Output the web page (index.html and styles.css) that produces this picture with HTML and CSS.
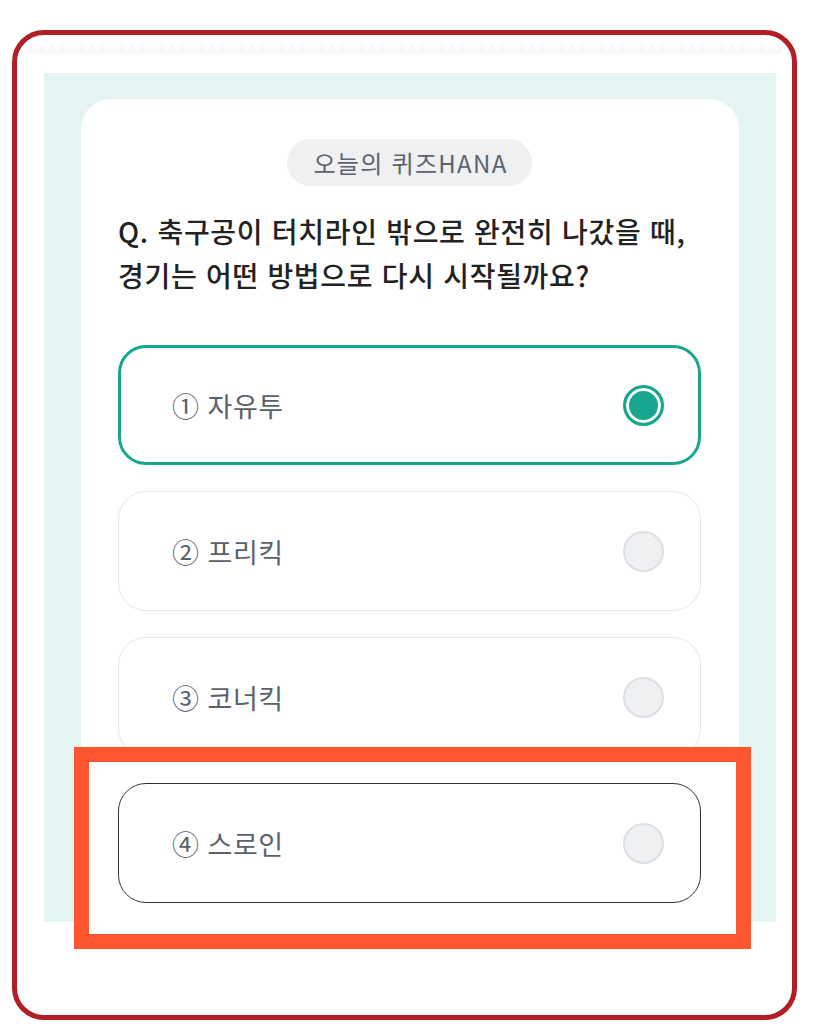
FILE: index.html
```html
<!DOCTYPE html>
<html lang="ko">
<head>
  <meta charset="UTF-8">
  <meta name="viewport" content="width=device-width, initial-scale=1.0">
  <title>오늘의 퀴즈HANA</title>
  <link rel="stylesheet" href="styles.css">
</head>
<body>
  <div class="frame">
    <div class="torn-edge"></div>

    <div class="panel">
      <div class="card">
        <div class="badge">오늘의 퀴즈HANA</div>

        <p class="question">Q. 축구공이 터치라인 밖으로 완전히 나갔을 때,<br>경기는 어떤 방법으로 다시 시작될까요?</p>

        <!-- Answer options -->
        <div class="options">
          <div class="option selected">
            <span class="label">① 자유투</span>
            <span class="radio"></span>
          </div>
          <div class="option">
            <span class="label">② 프리킥</span>
            <span class="radio"></span>
          </div>
          <div class="option">
            <span class="label">③ 코너킥</span>
            <span class="radio"></span>
          </div>
          <div class="option focused">
            <span class="label">④ 스로인</span>
            <span class="radio"></span>
          </div>
        </div>
      </div>
    </div>

    <!-- Annotation box drawn over the last option -->
    <div class="highlight"></div>
  </div>
</body>
</html>
```

FILE: styles.css
```css
body {
  margin: 0;
  padding: 0;
  background: #fff;
  font-family: "Noto Sans CJK KR", "Noto Sans", sans-serif;
}
.frame {
  position: relative;
  box-sizing: border-box;
  width: 785px;
  height: 990px;
  margin: 30px 0 0 12px;
  border: 5px solid #b01f26;
  border-radius: 32px;
  background: #fff;
  overflow: hidden;
}
.torn-edge {
  height: 14px;
  margin: 5px 10px 0;
  background:
    linear-gradient(135deg, #fff 45%, transparent 46%) 0 0 / 10px 14px repeat-x,
    linear-gradient(225deg, #fff 45%, transparent 46%) 0 0 / 10px 14px repeat-x,
    linear-gradient(#f3f3f3, #fafafa);
}
.panel {
  margin: 19px 16px 0 27px;
  padding: 26px 37px 0;
  background: #e3f4f2;
}
.card {
  background: #fff;
  border-radius: 30px 30px 0 0;
  padding: 40px 38px 19px 37px;
}
.badge {
  width: fit-content;
  margin: 0 auto;
  height: 47px;
  line-height: 47px;
  padding: 0 24px 0 26px;
  border-radius: 24px;
  background: #eef0f2;
  color: #5c636d;
  font-size: 24px;
  letter-spacing: 1.3px;
}
.question {
  margin: 23px 0 0;
  font-size: 28px;
  line-height: 44px;
  font-weight: 500;
  letter-spacing: 0.7px;
  color: #222;
}
.options {
  margin-top: 48px;
  display: flex;
  flex-direction: column;
  gap: 26px;
}
.option {
  box-sizing: border-box;
  height: 120px;
  display: flex;
  align-items: center;
  justify-content: space-between;
  padding: 0 36px 0 53px;
  border: 1px solid #e6e7e9;
  border-radius: 28px;
  background: #fff;
}
.option.selected {
  border: 3px solid #17a68e;
  padding: 0 34px 0 51px;
}
.option.focused {
  border-color: #333;
}
.label {
  font-size: 27px;
  letter-spacing: 0.5px;
  color: #5a616b;
}
.radio {
  box-sizing: border-box;
  width: 41px;
  height: 41px;
  border-radius: 50%;
  background: #eff0f2;
  border: 2px solid #dcdfe3;
}
.option.selected .radio {
  border: 3px solid #17a68e;
  background: #17a68e;
  box-shadow: inset 0 0 0 3px #fff;
}
.highlight {
  position: absolute;
  left: 57px;
  top: 712px;
  width: 677px;
  height: 202px;
  box-sizing: border-box;
  border: 15px solid #ff5530;
}
```
